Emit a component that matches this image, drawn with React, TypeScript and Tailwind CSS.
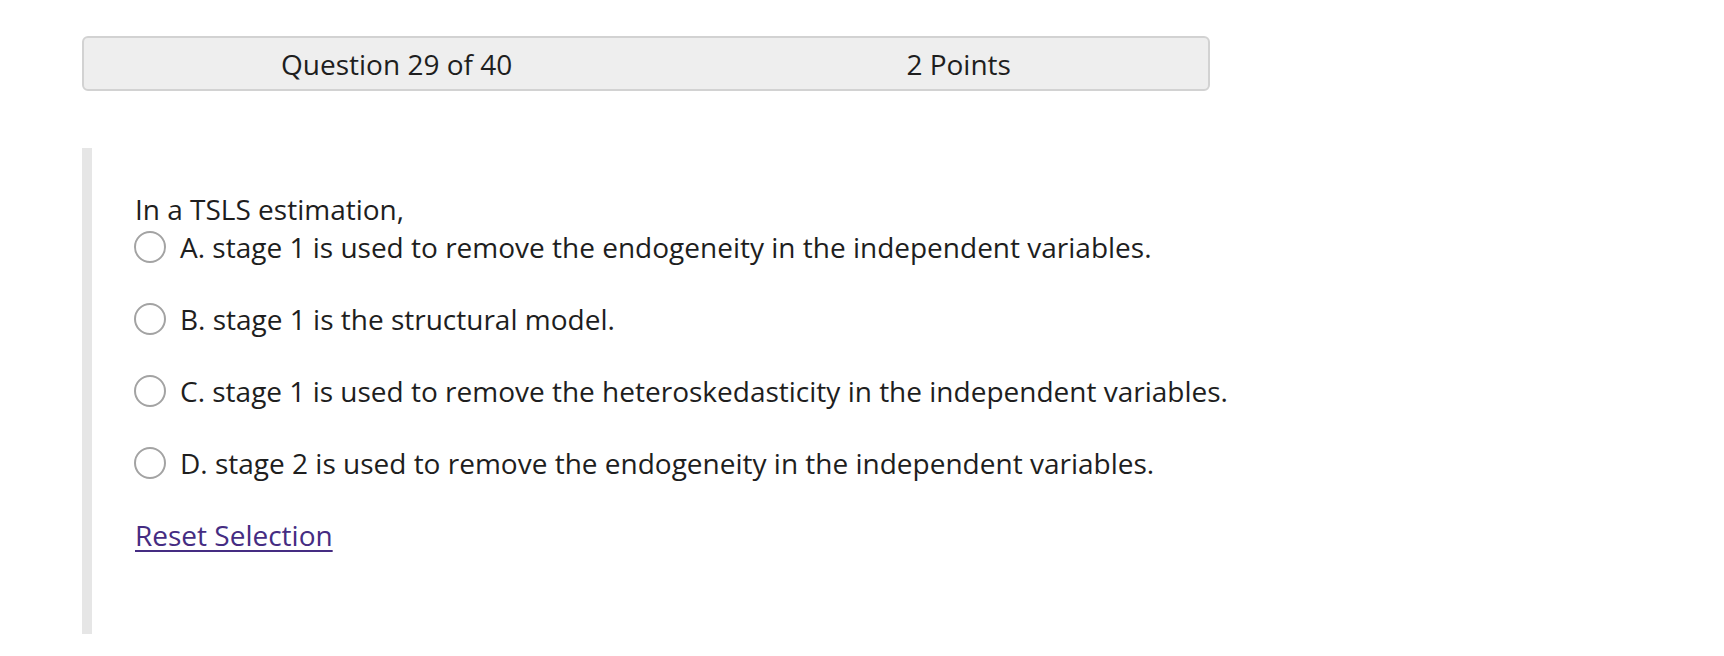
import React from "react";

const options = [
  "A. stage 1 is used to remove the endogeneity in the independent variables.",
  "B. stage 1 is the structural model.",
  "C. stage 1 is used to remove the heteroskedasticity in the independent variables.",
  "D. stage 2 is used to remove the endogeneity in the independent variables.",
];

export default function App() {
  return (
    <div
      className="min-h-screen bg-white pt-[36px] pl-[82px] text-[#1e1e1e]"
      style={{ fontFamily: '"Open Sans", "Noto Sans", sans-serif' }}
    >
      <div className="w-[1128px] h-[55px] border-2 border-[#d2d2d2] rounded-md bg-[#eeeeee] flex items-center justify-around text-[28px] leading-[36px]">
        <span>Question 29 of 40</span>
        <span>2 Points</span>
      </div>
      <div className="mt-[57px] flex">
        <div className="w-[10px] h-[486px] bg-[#e6e6e6] shrink-0" />
        <div className="pl-[43px] pt-[43px] text-[28px] leading-[36px]">
          <p>In a TSLS estimation,</p>
          <div className="mt-[2px] flex flex-col gap-[36px]">
            {options.map((o) => (
              <label key={o} className="flex items-center gap-[14px] cursor-pointer">
                <span className="w-[32px] h-[32px] rounded-full border-2 border-[#a3a3a3] bg-white shrink-0 -ml-[1px]" />
                <span>{o}</span>
              </label>
            ))}
          </div>
          <a href="#" className="block mt-[36px] w-max text-[#452c82] underline underline-offset-[4px] decoration-[2px]">
            Reset Selection
          </a>
        </div>
      </div>
    </div>
  );
}
